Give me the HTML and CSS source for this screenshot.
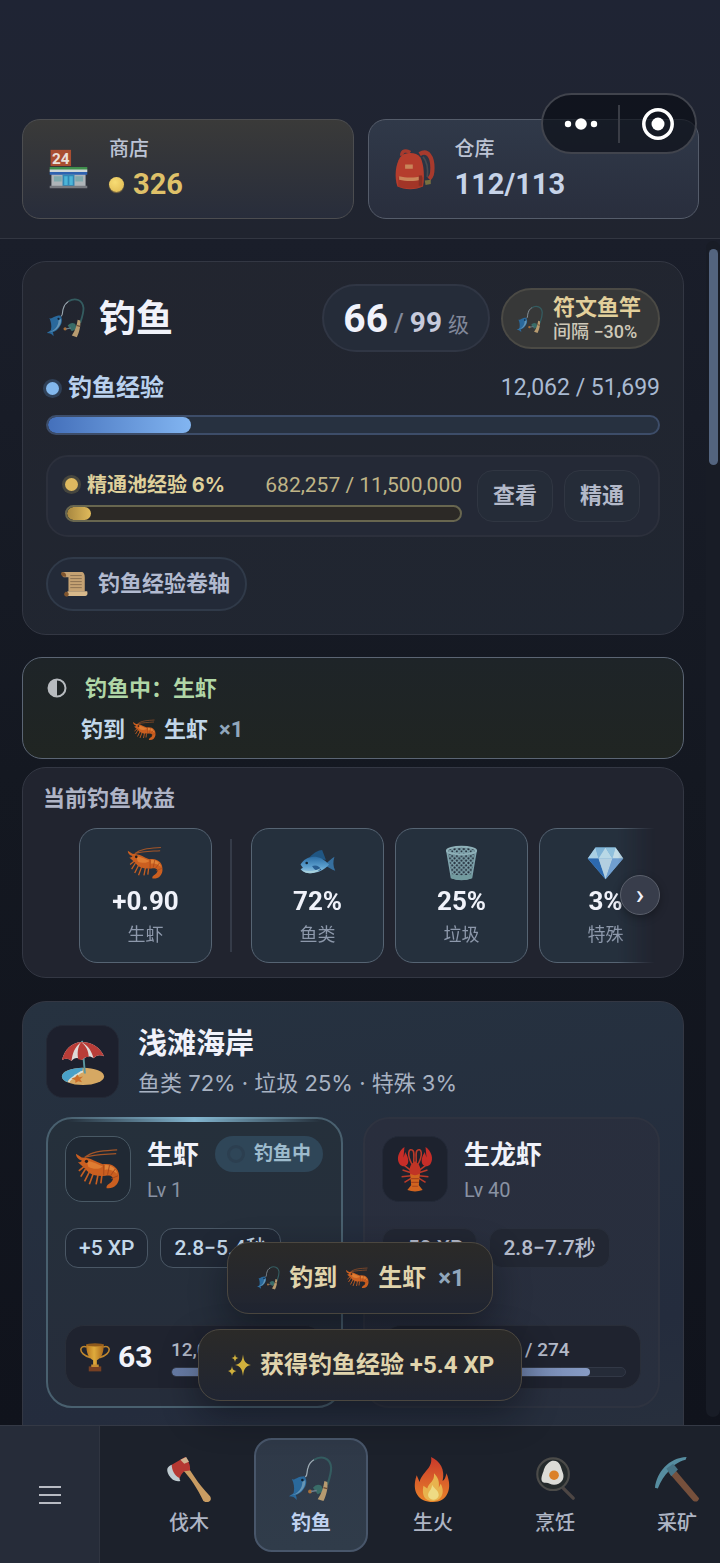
FILE: index.html
```html
<!DOCTYPE html>
<html lang="zh-CN">
<head>
<meta charset="utf-8">
<meta name="viewport" content="width=device-width, initial-scale=1">
<title>钓鱼</title>
<link rel="stylesheet" href="styles.css">
</head>
<body>
<svg class="sprite" aria-hidden="true">
  <defs>
    <linearGradient id="gold" x1="0" x2="1"><stop offset="0" stop-color="#b9771f"/><stop offset=".45" stop-color="#dfab3c"/><stop offset="1" stop-color="#ab691c"/></linearGradient>
    <linearGradient id="flame" x1="0" y1="0" x2="0" y2="1"><stop offset="0" stop-color="#c9382a"/><stop offset="1" stop-color="#e8832a"/></linearGradient>
    <linearGradient id="fishBody" x1="0" y1="0" x2="0" y2="1"><stop offset="0" stop-color="#2b6ca3"/><stop offset=".6" stop-color="#5b9fce"/><stop offset="1" stop-color="#9cc7df"/></linearGradient>
    <pattern id="mesh" width="6" height="6" patternUnits="userSpaceOnUse"><path d="M0 0l6 6M6 0L0 6" stroke="#7fa3ac" stroke-width="1.6"/></pattern>
  </defs>
  <symbol id="i-bag" viewBox="0 0 48 48">
    <path d="M30 6c10-6 15 4 15 16 0 8-1 10-4 13" fill="none" stroke="#a83a2d" stroke-width="5"/><path d="M34 9c5 6 6 15 5 24" fill="none" stroke="#474b50" stroke-width="2"/><path d="M9 8c0-6 5-7 10-4" fill="none" stroke="#a83a2d" stroke-width="4"/>
    <path d="M7 10c5-7 19-7 24 0 4 8 5 22 3 34-8 4-22 4-30 0C0 32 2 18 7 10z" fill="#b53d2d"/><path d="M5 33c9 3 20 3 29 0l-1 11c-8 3-20 3-28 0z" fill="#a23527"/>
    <path d="M6 32c8 2 18 2 26 0v4c-8 2-18 2-26 0zM13 18h9v5h-9z" fill="#c98559"/><path d="M29 31h4v12h-4z" fill="#862f24"/><path d="M36 37l7-1v5l-6 1z" fill="#777040"/>
  </symbol>
  <symbol id="i-rod" viewBox="0 0 48 48">
    <path d="M27 4C35-1 44 2 45 12c0 7-2 12-4 18" fill="none" stroke="#345c60" stroke-width="2.200"/><path d="M18 22c3-2 1-6 3-10 1-4 3-6 6-8" fill="none" stroke="#9fadb6" stroke-width="1.300"/>
    <path d="M4 24c3 2 5-3 13-3 3 3 3 9-1 14-2 3-5 5-8 6 1 1 1 3 1 5-2-3-4-4-8-4 2-2 4-2 5-4 1-5 0-10-2-14z" fill="#2a699c"/><path d="M18 25c1 7-4 13-10 15-2 1-5 1-6 1 9-1 13-8 13-14z" fill="#6796b5"/><circle cx="15" cy="25" r="1.300" fill="#13202f"/>
    <path d="M26 33q4-5 9-2l2 6-6 3z" fill="#396c68"/><circle cx="23" cy="37" r="2" fill="#a9703a"/><path d="M24 37l6-1" stroke="#6c7d8c" stroke-width="1.500"/><path d="M38 26l3 1c1 6-1 14-4 20l-6-2c4-6 6-12 7-19z" fill="#b79b70"/><path d="M37 33l4 1" stroke="#6b4a33" stroke-width="1.500"/>
  </symbol>
  <symbol id="i-scroll" viewBox="0 0 48 48">
    <path d="M4 4h33q4 2 4 9v23H14V13H6q-4-4-2-9z" fill="#c5a273"/><path d="M2 5c5-2 9 2 8 7H6c-4-1-5-4-4-7z" fill="#80552e"/><path d="M13 36h32q2 7-3 8H12q-5-3 1-8z" fill="#d8b98b"/><path d="M9 37c6-1 7 6 3 8-5 0-7-4-3-8z" fill="#80552e"/>
    <path d="M17 10h19M17 15h19M17 20h19M17 25h19M17 30h19" stroke="#8b7152" stroke-width="1.600"/>
  </symbol>
  <symbol id="i-shrimp" viewBox="0 0 48 48">
    <path d="M10 12C18 5 30 5 44 4M10 12C20 9 31 9 43 8" fill="none" stroke="#a35528" stroke-width="1.300"/>
    <path d="M1 8l6 4c10 0 15 5 22 7 11-2 18 5 17 15-1 7-6 11-13 10-1-4 4-4 6-8 2-3-1-6-7-5-10 1-17-1-21-7L3 17c3 0 4-1 4-2-4-1-6-4-6-7z" fill="#cb5f20"/>
    <path d="M12 15c7 1 13 5 17 6-2 3-9 4-15 1z" fill="#df7c32"/><path d="M31 20c6-1 12 3 13 9-5-4-9-5-13-4z" fill="#e08338"/><path d="M30 20v11M36 20l-2 10M42 24l-5 7M45 31l-7 3" stroke="#a8471a" stroke-width="1"/>
    <path d="M11 24l-5 8M15 27l-5 10M19 29l-4 11M24 30l-2 10M28 31l-1 8M10 21l-6 5" fill="none" stroke="#c75f22" stroke-width="1.700"/><circle cx="12" cy="16" r="1.700" fill="#231b1b"/>
  </symbol>
  <symbol id="i-fish" viewBox="0 0 48 48">
    <path d="M35 25c4-3 7-7 11-9-2 6-2 12 1 18-5-1-8-4-12-6z" fill="#366f9e"/><path d="M14 16c5-5 11-9 16-9l5 13z" fill="#205683"/><path d="M2 26C8 15 25 10 39 26 29 38 9 41 2 32l3-2z" fill="url(#fishBody)"/>
    <path d="M17 28c5-2 10 0 12 5-5 2-9 1-12-5z" fill="#285e91"/><path d="M4 33c8 3 18 1 25-3-7 8-19 10-25 3z" fill="#a5cfdc"/><circle cx="10" cy="24" r="1.700" fill="#132431"/>
  </symbol>
  <symbol id="i-bin" viewBox="0 0 48 48">
    <path d="M5 8l6 35q13 5 26 0l6-35z" fill="url(#mesh)"/><path d="M5 8l6 35q13 5 26 0l6-35" fill="none" stroke="#7fa3ac" stroke-width="2"/><ellipse cx="24" cy="8" rx="19" ry="5" fill="url(#mesh)" stroke="#8fb1b9" stroke-width="2.500"/><path d="M10 38q14 4 28 0l-1 6q-13 4-26 0z" fill="#729a9e"/>
  </symbol>
  <symbol id="i-gem" viewBox="0 0 48 48">
    <path d="M11 4h26l10 14-23 27L1 18z" fill="#6fa7d4"/><path d="M11 4l4 14H1z" fill="#a9cfe3"/><path d="M11 4h13l-9 14z" fill="#7fb3d6"/><path d="M24 4l9 14H15z" fill="#b8d8e6"/><path d="M24 4h13l-4 14z" fill="#8fc0dc"/><path d="M37 4l10 14H33z" fill="#c2dce6"/><path d="M1 18h14l9 27z" fill="#2d69ae"/><path d="M15 18h18l-9 27z" fill="#b3cfe0"/><path d="M33 18h14L24 45z" fill="#719fd0"/>
  </symbol>
  <symbol id="i-beach" viewBox="0 0 48 48">
    <ellipse cx="24" cy="39" rx="22" ry="9" fill="#d6a863"/><path d="M24 30C12 30 2 34 2 39c0 3 3 5 6 6 0-4 5-3 7-7 3 0 4-4 8-4z" fill="#4aa1c8"/><path d="M9 45c1-4 5-4 7-7 3 0 4-4 8-4" fill="none" stroke="#d9dfd8" stroke-width="2"/><path d="M23 2l3 34" stroke="#5a97a0" stroke-width="2"/>
    <path d="M2 22C5 10 12 4 22 3c12 0 20 6 24 15-5-2-8-1-11 2-4-3-8-2-12 2-4-3-8-3-11 1-3-3-6-3-10-1z" fill="#dedbd8"/><path d="M2 22C5 10 12 4 22 3 15 9 13 15 12 23c-3-3-6-3-10-1zM22 3c-4 6-4 12-3 18l4 1c4-4 5-3 7-3 0-7-3-12-8-16zM22 3c8 4 11 10 13 17 3-3 6-4 11-2C42 9 34 3 22 3z" fill="#b83d38"/>
    <path d="M18 37l2 3 4-1-3 3 2 3-4-1-3 2v-3l-4-2 4-1z" fill="#cc6f2c"/>
  </symbol>
  <symbol id="i-lobster" viewBox="0 0 48 48">
    <path d="M22 21C14 8 18 1 22 5c2 3 0 8 1 13M26 21C34 8 30 1 26 5c-2 3 0 8-1 13M19 25l-8-6M29 25l8-6M20 28l-9-3M20 31l-10 1M21 33l-8 5M28 28l9-3M28 31l10 1M27 33l8 5" fill="none" stroke="#bb3a29" stroke-width="1.600"/>
    <path d="M13 1C7 5 4 13 8 19c4 4 9 2 9-3 0-6-3-8-3-10l-2 6zM35 1c6 4 9 12 5 18-4 4-9 2-9-3 0-6 3-8 3-10l2 6z" fill="#c62d28"/>
    <path d="M24 16c5 3 7 8 5 14l-5 4-5-4c-2-6 0-11 5-14z" fill="#c13425"/><path d="M19 29q5 3 10 0l-1 12 4 5q-8 3-16 0l4-5z" fill="#d0641f"/><path d="M20 34h8M20 38h8M21 42h6" stroke="#a9431b" stroke-width="1.300"/>
  </symbol>
  <symbol id="i-trophy" viewBox="0 0 48 48">
    <path d="M11 8C2 5-2 12 5 19c4 4 8 5 12 6M37 8c9-3 13 4 6 11-4 4-8 5-12 6" fill="none" stroke="#bd862f" stroke-width="2.500"/><path d="M10 4h28c0 14-4 22-11 25v8h-6v-8C14 26 10 18 10 4z" fill="url(#gold)"/><ellipse cx="24" cy="4.500" rx="14" ry="2.500" fill="#8f5a1c"/><path d="M14 39h20v8H14z" fill="#774023"/><path d="M18 36h12v4H18z" fill="#c58b31"/>
  </symbol>
  <symbol id="i-spark" viewBox="0 0 48 48">
    <path d="M31 3c2 14 4 18 16 21-12 3-14 8-16 22-2-14-4-19-16-22 12-3 14-7 16-21zM9 26c1 7 3 9 9 10-6 2-8 4-9 10-1-6-3-8-8-10 5-1 7-3 8-10zM15 2c1 6 2 7 7 8-5 1-6 3-7 8-1-5-2-7-7-8 5-1 6-2 7-8z" fill="#d0b03c"/>
  </symbol>
  <symbol id="i-axe" viewBox="0 0 48 48">
    <path d="M20 7c6 9 12 20 26 35 3 5-3 8-7 5C33 34 25 22 17 14z" fill="#c99c62"/><path d="M6 9L20 1c3 3 6 9 5 14l-6 1c-3 3-4 5-5 8C8 20 5 15 6 9z" fill="#b53832"/><path d="M6 9c-5 2-6 5-3 11 3 5 7 7 12 6-1-2-1-2-1-3-5-3-8-8-8-14z" fill="#bfcbd0"/><path d="M15 4l6-3 3 5-5 2z" fill="#d0b28f"/>
  </symbol>
  <symbol id="i-fire" viewBox="0 0 48 48">
    <path d="M22 1c2 12-9 15-12 26l-3-7c-6 17 2 28 17 28s21-14 14-30c-1 5-2 7-4 8C37 14 31 5 22 1z" fill="url(#flame)"/><path d="M25 18c1 9-5 9-7 16l-4-3c-2 10 1 16 10 16s13-9 8-18l-2 4c1-7-1-11-5-15z" fill="#e8b34e"/><path d="M23 30c0 6-5 7-4 12 2 5 10 5 11-1 0-5-4-6-7-11z" fill="#eedb83"/>
  </symbol>
  <symbol id="i-pan" viewBox="0 0 48 48">
    <path d="M32 33l11 11" stroke="#4d4644" stroke-width="3.500" stroke-linecap="round"/><circle cx="22" cy="19" r="16.500" fill="#252b2c" stroke="#4b4b49" stroke-width="2.200"/><path d="M21 5c8-1 9 6 11 12 3 7-2 13-9 13-4 0-6-3-10-2-5-1-3-7-1-12 1-5 4-9 9-11z" fill="#dcdcd7"/><circle cx="23" cy="20" r="5" fill="#db8027"/>
  </symbol>
  <symbol id="i-pick" viewBox="0 0 48 48">
    <path d="M15 17l5-5 27 32q-1 5-6 3z" fill="#76503c"/><path d="M1 33C3 17 15 2 34 1l-1 3c-8 2-13 6-17 11-5 5-9 11-12 19z" fill="#568da0"/><path d="M13 13l7-5 5 6-7 7z" fill="#487486"/>
  </symbol>
</svg>

<div class="app">
  <header class="top">
    <button class="wallet wallet-shop" type="button">
      <svg class="ic ic-wallet" viewBox="0 0 48 48">
        <path d="M4 27h40v17H4z" fill="#aeb4b8"/><path d="M2 21h44v4H2z" fill="#3f8f4c"/><path d="M2 24h44v3H2z" fill="#cfd6d6"/><path d="M2 27h44v3H2z" fill="#2e62b0"/>
        <path d="M7 32h9v6H7zM32 32h9v6h-9z" fill="#7fa9ad"/><path d="M17 30h14v14H17z" fill="#3187b5"/><path d="M19 32h4v10h-4zM25 32h4v10h-4z" fill="#4bb5d8"/><path d="M2 43h44v3H2z" fill="#777a80"/>
        <path d="M3 1h24v19H3z" fill="#a94e31"/><text x="15" y="17" text-anchor="middle" class="shop-sign">24</text>
      </svg>
      <span class="wallet-text"><span class="wallet-label">商店</span><span class="wallet-value gold"><i class="coin"></i>326</span></span>
    </button>
    <button class="wallet wallet-store" type="button">
      <svg class="ic ic-wallet"><use href="#i-bag"/></svg>
      <span class="wallet-text"><span class="wallet-label">仓库</span><span class="wallet-value">112/113</span></span>
    </button>
    <div class="capsule">
      <button type="button" aria-label="更多"><svg class="dots" viewBox="0 0 34 14"><circle cx="4" cy="7" r="3.200"/><circle cx="17" cy="7" r="5.800"/><circle cx="30" cy="7" r="3.200"/></svg></button>
      <button type="button" aria-label="关闭"><svg class="target" viewBox="0 0 34 34"><circle cx="17" cy="17" r="14.200" class="ring"/><circle cx="17" cy="17" r="6.500"/></svg></button>
    </div>
  </header>

  <div class="body">
    <main class="feed">
      <section class="card skill">
        <div class="skill-head">
          <svg class="ic ic-title"><use href="#i-rod"/></svg>
          <h1>钓鱼</h1>
          <div class="level"><b>66</b><span class="slash">/</span><strong>99</strong><span class="unit">级</span></div>
          <button class="tool" type="button"><svg class="ic ic-tool"><use href="#i-rod"/></svg><span class="tool-text"><b>符文鱼竿</b><span>间隔 −30%</span></span></button>
        </div>
        <div class="xp">
          <div class="xp-row"><span class="xp-name"><i class="dot"></i>钓鱼经验</span><span class="xp-num">12,062 / 51,699</span></div>
          <div class="bar"><div class="fill" style="width:23.4%"></div></div>
        </div>
        <div class="mastery">
          <div class="mastery-main">
            <div class="pool-row"><span class="pool-name"><i class="dot dot-gold"></i>精通池经验 6%</span><span class="pool-num">682,257 / 11,500,000</span></div>
            <div class="bar bar-gold"><div class="fill" style="width:6%"></div></div>
          </div>
          <div class="mastery-actions"><button class="small-btn" type="button">查看</button><button class="small-btn" type="button">精通</button></div>
        </div>
        <button class="buff" type="button"><svg class="ic ic-buff"><use href="#i-scroll"/></svg>钓鱼经验卷轴</button>
      </section>

      <section class="status">
        <svg class="half" viewBox="0 0 20 20"><circle cx="10" cy="10" r="8.500"/><path d="M10 1.500a8.500 8.500 0 0 0 0 17z"/></svg>
        <div class="status-lines">
          <p class="status-now">钓鱼中：生虾</p>
          <p class="status-got">钓到<svg class="ic ic-inline"><use href="#i-shrimp"/></svg>生虾<span class="times">×1</span></p>
        </div>
      </section>

      <section class="card yields">
        <h2>当前钓鱼收益</h2>
        <div class="yield-scroll">
          <div class="yield"><svg class="ic ic-yield"><use href="#i-shrimp"/></svg><b>+0.90</b><span>生虾</span></div>
          <hr class="yield-rule">
          <div class="yield"><svg class="ic ic-yield"><use href="#i-fish"/></svg><b>72%</b><span>鱼类</span></div>
          <div class="yield"><svg class="ic ic-yield"><use href="#i-bin"/></svg><b>25%</b><span>垃圾</span></div>
          <div class="yield"><svg class="ic ic-yield"><use href="#i-gem"/></svg><b>3%</b><span>特殊</span></div>
        </div>
        <button class="next" type="button" aria-label="下一个">›</button>
      </section>

      <section class="card place">
        <div class="place-head">
          <span class="place-icon"><svg class="ic ic-place"><use href="#i-beach"/></svg></span>
          <div><h2>浅滩海岸</h2><p>鱼类 72% · 垃圾 25% · 特殊 3%</p></div>
        </div>
        <div class="catches">
          <article class="catch active">
            <div class="catch-head">
              <span class="catch-icon"><svg class="ic ic-catch"><use href="#i-shrimp"/></svg></span>
              <div class="catch-title"><h3>生虾</h3><p>Lv 1</p></div>
              <span class="badge"><i class="spinner"></i>钓鱼中</span>
            </div>
            <div class="chips"><span>+5 XP</span><span>2.8−5.4秒</span></div>
            <div class="rank">
              <svg class="ic ic-trophy"><use href="#i-trophy"/></svg><b>63</b>
              <div class="rank-main"><span>12,062 / 12,881</span><div class="bar bar-thin"><div class="fill" style="width:72%"></div></div></div>
            </div>
          </article>
          <article class="catch">
            <div class="catch-head">
              <span class="catch-icon"><svg class="ic ic-catch"><use href="#i-lobster"/></svg></span>
              <div class="catch-title"><h3>生龙虾</h3><p>Lv 40</p></div>
            </div>
            <div class="chips"><span>+50 XP</span><span>2.8−7.7秒</span></div>
            <div class="rank">
              <svg class="ic ic-trophy"><use href="#i-trophy"/></svg><b>3</b>
              <div class="rank-main"><span>203 / 274</span><div class="bar bar-thin"><div class="fill" style="width:74%"></div></div></div>
            </div>
          </article>
        </div>
      </section>
    </main>
    <div class="scrollbar"><div class="thumb"></div></div>
  </div>

  <nav class="tabs">
    <button class="menu" type="button" aria-label="菜单"><svg viewBox="0 0 22 20"><path d="M0 2h22M0 10h22M0 18h22"/></svg></button>
    <div class="tab-list">
      <a class="tab" href="#woodcutting"><svg class="ic ic-tab"><use href="#i-axe"/></svg>伐木</a>
      <a class="tab current" href="#fishing" aria-current="page"><svg class="ic ic-tab"><use href="#i-rod"/></svg>钓鱼</a>
      <a class="tab" href="#firemaking"><svg class="ic ic-tab"><use href="#i-fire"/></svg>生火</a>
      <a class="tab" href="#cooking"><svg class="ic ic-tab"><use href="#i-pan"/></svg>烹饪</a>
      <a class="tab" href="#mining"><svg class="ic ic-tab"><use href="#i-pick"/></svg>采矿</a>
    </div>
  </nav>

  <div class="toasts" role="status">
    <div class="toast"><svg class="ic ic-inline"><use href="#i-rod"/></svg>钓到<svg class="ic ic-inline"><use href="#i-shrimp"/></svg>生虾<span class="times">×1</span></div>
    <div class="toast"><svg class="ic ic-inline"><use href="#i-spark"/></svg>获得钓鱼经验 +5.4 XP</div>
  </div>
</div>
</body>
</html>
```

FILE: styles.css
```css
* { box-sizing: border-box; }
body, h1, h2, h3, p { margin: 0; }
body {
  background: #141820;
  color: #f0f2fa;
  font: 500 22px/32px Roboto, "Noto Sans CJK SC", sans-serif;
}
button {
  font: inherit;
  color: inherit;
  background: none;
  border: 0;
  padding: 0;
  cursor: pointer;
}
a { color: inherit; text-decoration: none; }
i { font-style: normal; }
.sprite { position: absolute; width: 0; height: 0; }
.shop-sign { font: 700 18px Roboto, sans-serif; fill: #eadfd8; }
.ic { display: block; flex: none; }

.app {
  position: relative;
  display: flex;
  flex-direction: column;
  height: 100vh;
  overflow: hidden;
}

/* Top bar */
.top {
  position: relative;
  flex: none;
  display: grid;
  grid-template-columns: 1fr 1fr;
  gap: 14px;
  padding: 119px 21px 19px 22px;
  background: linear-gradient(#1f2434, #20242f);
  border-bottom: 1px solid #323641;
}
.wallet {
  display: flex;
  align-items: center;
  gap: 20px;
  height: 100px;
  padding: 0 25px;
  border: 1px solid #4c4d50;
  border-radius: 18px;
  text-align: left;
}
.wallet-shop { background: linear-gradient(#3a3a39, #282d3b); }
.wallet-store { background: linear-gradient(#303949, #292e3d); border-color: #555c6a; }
.ic-wallet { width: 41px; height: 41px; }
.wallet-text { display: flex; flex-direction: column; gap: 2px; padding-bottom: 4px; }
.wallet-label { font-size: 20px; line-height: 32px; color: #bcc3d4; }
.wallet-value {
  display: flex;
  align-items: center;
  gap: 9px;
  font-size: 29px;
  line-height: 34px;
  font-weight: 700;
  color: #c6d3e8;
}
.wallet-value.gold { color: #dfc169; }
.coin {
  width: 15px;
  height: 15px;
  border-radius: 50%;
  background: radial-gradient(circle at 40% 35%, #f7dc74, #dfb850);
  box-shadow: 0 1px 1px #8b7444;
}
.capsule {
  position: absolute;
  right: 23px;
  top: 93px;
  display: flex;
  align-items: center;
  width: 156px;
  height: 61px;
  border: 2px solid #41444d;
  border-radius: 31px;
  background: rgba(9, 12, 20, .65);
}
.capsule button { flex: 1; display: flex; justify-content: center; align-items: center; height: 38px; }
.capsule button + button { border-left: 2px solid #3a3d46; }
.capsule svg { fill: #fff; display: block; }
.dots { width: 34px; height: 14px; }
.target { width: 34px; height: 34px; }
.target .ring { fill: none; stroke: #fff; stroke-width: 3.500; }

/* Scrolling area */
.body { flex: 1; min-height: 0; display: flex; background: linear-gradient(#1a1e2a, #141821 45%, #10131c); }
.feed { flex: 1; min-width: 0; overflow: hidden; padding: 22px 22px 0; }
.scrollbar { flex: none; width: 14px; margin: 2px 0 8px; padding: 8px 2px 0 3px; background: #181c26; border-radius: 7px; }
.thumb { height: 216px; border-radius: 5px; background: #53647f; }
.card { border: 1px solid #333743; border-radius: 24px; background: linear-gradient(165deg, #22252f, #202631); }

/* Skill summary */
.skill { padding: 22px 23px 23px; display: flex; flex-direction: column; align-items: stretch; gap: 20px; }
.skill-head { display: flex; align-items: center; }
.ic-title { width: 40px; height: 42px; margin-right: 13px; }
.skill h1 { font-size: 37px; line-height: 54px; padding-top: 4px; font-weight: 700; flex: 1; }
.level {
  display: flex;
  align-items: baseline;
  gap: 6px;
  height: 68px;
  padding: 0 19px;
  border: 2px solid #303644;
  border-radius: 34px;
  background: #252c39;
  line-height: 66px;
  color: #c8cbdc;
}
.level b { font-size: 39px; color: #f0f2fb; }
.level strong { font-size: 28px; }
.level .slash { color: #81889a; font-size: 25px; }
.level .unit { font-size: 21px; font-weight: 400; color: #81889a; }
.tool {
  display: flex;
  align-items: center;
  gap: 9px;
  height: 61px;
  margin-left: 11px;
  padding: 3px 17px 0 13px;
  border: 2px solid #4b4a45;
  border-radius: 31px;
  background: #373838;
  text-align: left;
  white-space: nowrap;
}
.ic-tool { width: 28px; height: 29px; }
.tool-text { display: flex; flex-direction: column; font-size: 18px; line-height: 24px; color: #cec8b8; }
.tool-text b { font-size: 22px; color: #e2cf9b; }
.xp-row, .pool-row { display: flex; justify-content: space-between; align-items: center; white-space: nowrap; }
.xp-name { display: flex; align-items: center; gap: 9px; font-size: 24px; font-weight: 700; color: #b9d1ee; }
.xp-num { font-size: 23px; font-weight: 400; color: #a9bad2; }
.dot { width: 13px; height: 13px; border-radius: 50%; background: #83b8ed; box-shadow: 0 0 0 3px #304158; }
.dot-gold { background: #dfba60; box-shadow: 0 0 0 3px #46463f; }
.bar { height: 20px; margin-top: 11px; border: 2px solid #3d4d69; border-radius: 10px; background: #273140; overflow: hidden; }
.fill { height: 100%; border-radius: 10px; background: linear-gradient(90deg, #4470bb, #82b5f1); }
.mastery {
  display: flex;
  align-items: center;
  gap: 15px;
  height: 82px;
  padding: 0 18px 0 17px;
  border: 2px solid #2c303c;
  border-radius: 22px;
  background: #242936;
}
.mastery-main { flex: 1; }
.pool-row { line-height: 28px; }
.pool-name { display: flex; align-items: center; gap: 9px; font-family: Inter, "Noto Sans CJK SC", sans-serif; font-size: 20px; font-weight: 700; color: #dfd09b; }
.pool-num { font-size: 21px; font-weight: 400; color: #bfb487; }
.bar-gold { height: 17px; margin-top: 6px; border-color: #68664f; background: #2c2926; }
.bar-gold .fill { background: linear-gradient(90deg, #a78740, #e0ba5b); }
.mastery-actions { display: flex; gap: 11px; }
.small-btn { width: 76px; height: 52px; border: 1px solid #303642; border-radius: 16px; background: #252c38; color: #b3b9c9; font-weight: 700; }
.buff {
  align-self: flex-start;
  display: flex;
  align-items: center;
  gap: 9px;
  height: 54px;
  padding: 0 15px 0 12px;
  border: 2px solid #303a49;
  border-radius: 27px;
  background: #232a38;
  color: #b2bad0;
  font-weight: 700;
}
.ic-buff { width: 29px; height: 30px; }

/* Current action */
.status {
  display: flex;
  gap: 18px;
  height: 102px;
  margin-top: 22px;
  padding: 10px 24px;
  border: 1px solid #5b6574;
  border-radius: 20px;
  background: linear-gradient(#1e2428, #202522);
  font-weight: 700;
}
.half { width: 20px; height: 20px; margin-top: 10px; fill: #b7bbbf; }
.half circle { fill: none; stroke: #b7bbbf; stroke-width: 2; }
.status-lines { line-height: 41px; }
.status-now { color: #b0d6a6; }
.status-got { display: flex; align-items: center; gap: 6px; margin-left: -4px; color: #c1d6e8; }
.ic-inline { width: 27px; height: 24px; }
.times { color: #91a7bc; margin-left: 5px; }

/* Yields */
.yields { position: relative; height: 211px; margin-top: 8px; padding: 15px 23px 0 20px; background: #21242f; }
.yields h2 { font-size: 22px; font-weight: 700; color: #afb4c6; }
.yield-scroll {
  display: flex;
  gap: 11px;
  margin-top: 13px;
  padding-left: 36px;
  overflow: hidden;
  mask-image: linear-gradient(90deg, #000 calc(100% - 42px), transparent calc(100% - 5px));
}
.yield {
  flex: none;
  display: flex;
  flex-direction: column;
  align-items: center;
  width: 133px;
  height: 135px;
  padding-top: 15px;
  border: 1px solid #566473;
  border-radius: 18px;
  background: #25303d;
}
.ic-yield { width: 37px; height: 38px; margin-bottom: 3px; }
.yield b { font-size: 26px; }
.yield span { font-size: 18px; font-weight: 400; line-height: 36px; color: #8d98ab; }
.yield-rule { flex: none; width: 2px; height: 113px; margin: 11px 8px 11px 7px; border: 0; background: #353b48; }
.next {
  position: absolute;
  right: 23px;
  top: 107px;
  width: 40px;
  height: 40px;
  border: 1px solid #5b606c;
  border-radius: 50%;
  background: #383d4b;
  box-shadow: 0 3px 8px rgba(0, 0, 0, .3);
  font-size: 28px;
  line-height: 34px;
}

/* Fishing place */
.place { margin-top: 23px; padding: 23px 23px 48px; background: linear-gradient(170deg, #263240, #242c3d 75%, #28303d); }
.place-head { display: flex; align-items: flex-start; gap: 19px; }
.place-icon { display: grid; place-items: center; width: 73px; height: 73px; border: 1px solid #242936; border-radius: 17px; background: #1d202d; }
.ic-place { width: 46px; height: 48px; }
.place h2 { font-size: 29px; line-height: 38px; font-weight: 700; }
.place-head p { font-family: Inter, "Noto Sans CJK SC", sans-serif; font-weight: 400; line-height: 40px; color: #a8b2c2; }
.catches { display: grid; grid-template-columns: repeat(2, minmax(0, 1fr)); gap: 20px; margin-top: 14px; }
.catch { position: relative; height: 291px; padding: 17px; border: 2px solid #2e3340; border-radius: 26px; background: linear-gradient(160deg, #292e3d, #282f3e); }
.catch.active { border-color: #49606f; background: linear-gradient(#25303b, #262d3b); }
.catch.active::before {
  content: "";
  position: absolute;
  top: -2px;
  left: 20px;
  right: 20px;
  height: 5px;
  background: linear-gradient(90deg, transparent, #82b5cf 50%, transparent);
}
.catch-head { display: flex; align-items: flex-start; gap: 16px; }
.catch-icon { display: grid; place-items: center; flex: none; width: 66px; height: 66px; border: 1px solid #232937; border-radius: 17px; background: #1d222e; }
.active .catch-icon { border-color: #495965; background: #202934; }
.ic-catch { width: 46px; height: 46px; }
.catch-title { white-space: nowrap; flex: none; }
.catch-title h3 { font-size: 26px; line-height: 38px; font-weight: 700; }
.catch-title p { font-size: 20px; font-weight: 400; color: #8992a3; }
.badge {
  display: flex;
  align-items: center;
  gap: 9px;
  height: 36px;
  padding: 0 12px;
  border-radius: 18px;
  background: #2f4658;
  color: #9dbbcd;
  font-size: 19px;
  font-weight: 700;
  white-space: nowrap;
}
.spinner { width: 18px; height: 18px; border: 3px solid #2c3f50; border-radius: 50%; }
.chips { display: flex; gap: 12px; margin-top: 22px; font-size: 21px; line-height: 38px; white-space: nowrap; }
.chips span { padding: 0 13px; border: 1px solid #292f3c; border-radius: 13px; background: #222733; color: #b6bdcd; }
.active .chips span { border-color: #4a5765; background: #202835; color: #c3d8ea; }
.rank {
  display: flex;
  align-items: center;
  height: 64px;
  margin-top: 57px;
  padding: 0 14px;
  border: 1px solid #292e39;
  border-radius: 19px;
  background: #1f232f;
}
.ic-trophy { width: 30px; height: 30px; }
.rank b { width: 61px; padding-left: 8px; font-size: 30px; }
.rank-main { flex: 1; min-width: 0; font-size: 19px; line-height: 24px; color: #b4bac9; white-space: nowrap; overflow: hidden; }
.bar-thin { height: 10px; margin-top: 5px; border: 1px solid #323846; background: #252b38; }
.bar-thin .fill { background: linear-gradient(90deg, #667ba5, #879bc4); }

/* Bottom tabs */
.tabs { flex: none; display: flex; height: 138px; border-top: 1px solid #343945; background: #1c212b; }
.menu { flex: none; display: grid; place-items: center; width: 100px; background: #262c39; border-right: 1px solid #303541; }
.menu svg { width: 22px; height: 20px; stroke: #b8bbc3; stroke-width: 2; }
.tab-list { flex: 1; display: flex; gap: 8px; padding: 12px 0 11px 32px; overflow: hidden; }
.tab { flex: none; display: flex; flex-direction: column; align-items: center; gap: 6px; width: 114px; height: 114px; padding-top: 16px; border: 2px solid transparent; border-radius: 18px; font-size: 20px; line-height: 30px; color: #aeb5c4; }
.tab.current { border-color: #48566a; background: linear-gradient(#2f3948, #303c4a); color: #bfd1ef; font-weight: 700; }
.ic-tab { width: 46px; height: 46px; }

/* Toasts */
.toasts { position: absolute; left: 0; right: 0; bottom: 162px; display: flex; flex-direction: column; align-items: center; gap: 15px; pointer-events: none; }
.toast {
  display: flex;
  align-items: center;
  gap: 7px;
  height: 72px;
  padding: 0 27px;
  border: 1px solid #4b4740;
  border-radius: 22px;
  background: linear-gradient(#2b2a28, #202532);
  box-shadow: 0 14px 36px rgba(6, 9, 15, .45);
  color: #e0d4ac;
  font-size: 24px;
  font-weight: 700;
  white-space: nowrap;
}
```
